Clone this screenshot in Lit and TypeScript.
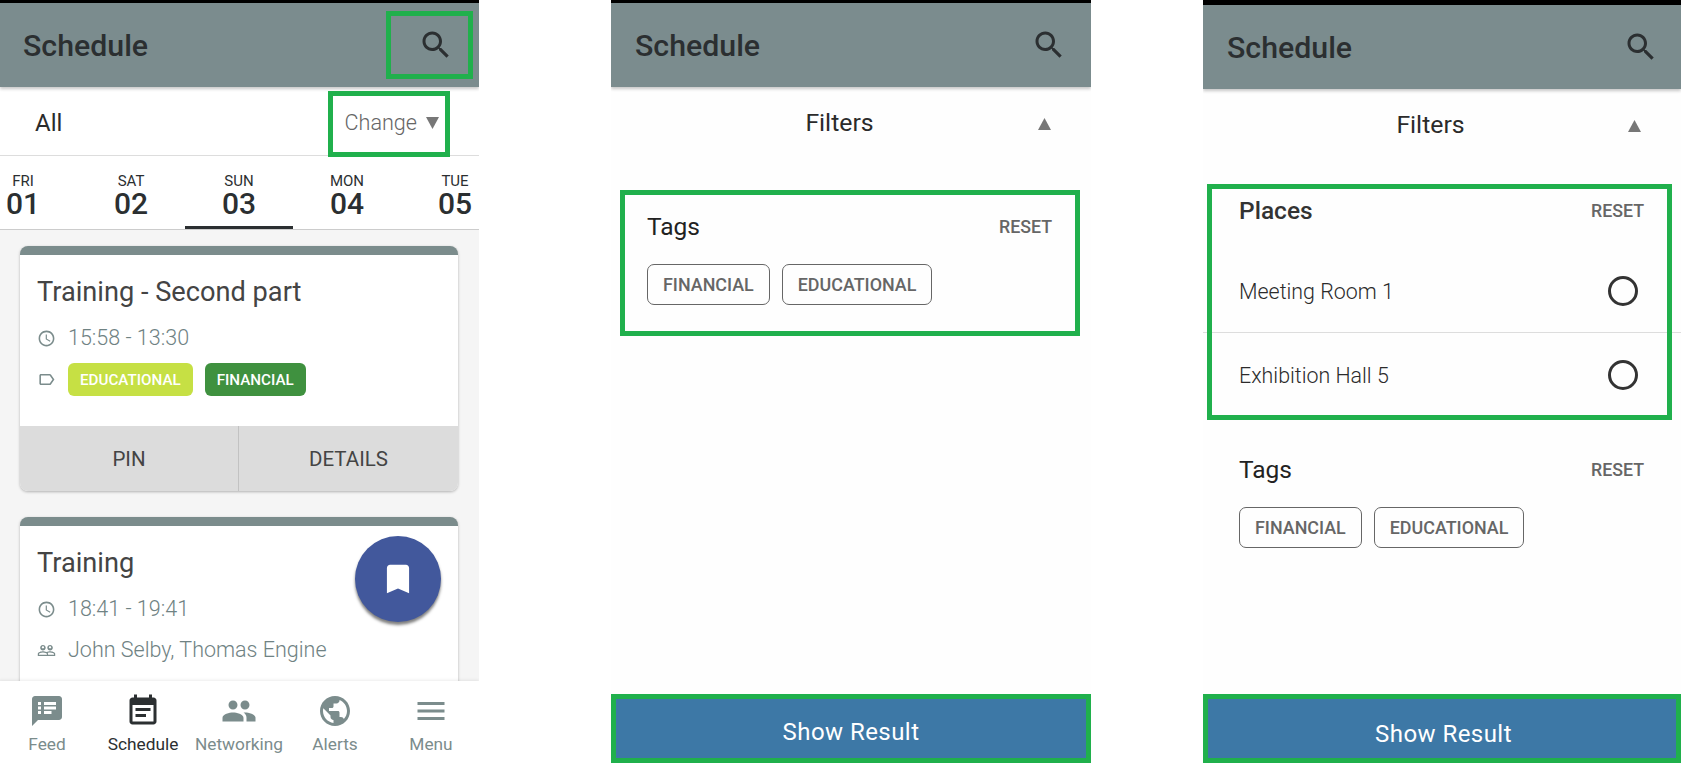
import { LitElement, html, css, svg } from "lit";
import { customElement } from "lit/decorators.js";

const P = {
  search: "M15.5 14h-.79l-.28-.27C15.41 12.59 16 11.11 16 9.5 16 5.91 13.09 3 9.5 3S3 5.91 3 9.5 5.91 16 9.5 16c1.61 0 3.09-.59 4.23-1.57l.27.28v.79l5 4.99L20.49 19l-4.99-5zm-6 0C7.01 14 5 11.99 5 9.5S7.01 5 9.5 5 14 7.01 14 9.5 11.99 14 9.5 14z",
  clock: "M11.99 2C6.47 2 2 6.48 2 12s4.47 10 9.99 10C17.52 22 22 17.52 22 12S17.52 2 11.99 2zM12 20c-4.42 0-8-3.58-8-8s3.58-8 8-8 8 3.58 8 8-3.58 8-8 8zm.5-13H11v6l5.25 3.15.75-1.23-4.5-2.67z",
  label: "M17.63 5.84C17.27 5.33 16.67 5 16 5L5 5.01C3.9 5.01 3 5.9 3 7v10c0 1.1.9 1.99 2 1.99L16 19c.67 0 1.27-.33 1.63-.84L22 12l-4.37-6.16zM16 17H5V7h11l3.55 5L16 17z",
  peopleO: "M16.5 13c-1.2 0-3.07.34-4.5 1-1.43-.67-3.3-1-4.5-1C5.33 13 1 14.08 1 16.25V19h22v-2.75c0-2.17-4.33-3.25-6.5-3.25zm-4 4.5h-10v-1.25c0-.54 2.56-1.75 5-1.75s5 1.21 5 1.75v1.25zm9 0H14v-1.25c0-.46-.2-.86-.52-1.22.88-.3 1.96-.53 3.02-.53 2.44 0 5 1.21 5 1.75v1.25zM7.5 12c1.93 0 3.5-1.57 3.5-3.5S9.43 5 7.5 5 4 6.57 4 8.5 5.57 12 7.5 12zm0-5.5c.83 0 1.5.67 1.5 1.5s-.67 1.5-1.5 1.5S6 8.83 6 8s.67-1.5 1.5-1.5zm9 5.5c1.93 0 3.5-1.57 3.5-3.5S18.43 5 16.5 5 13 6.57 13 8.5s1.57 3.5 3.5 3.5zm0-5.5c.83 0 1.5.67 1.5 1.5s-.67 1.5-1.5 1.5S15 8.83 15 8s.67-1.5 1.5-1.5z",
  bookmark: "M17 3H7c-1.1 0-2 .9-2 2v16l7-3 7 3V5c0-1.1-.9-2-2-2z",
  feed: "M20 2H4c-1.1 0-1.99.9-1.99 2L2 22l4-4h14c1.1 0 2-.9 2-2V4c0-1.1-.9-2-2-2zM8 14H6v-2h2v2zm0-3H6V9h2v2zm0-3H6V6h2v2zm7 6h-5v-2h5v2zm3-3h-8V9h8v2zm0-3h-8V6h8v2z",
  event: "M17 10H7v2h10v-2zm2-7h-1V1h-2v2H8V1H6v2H5c-1.11 0-1.99.9-1.99 2L3 19c0 1.1.89 2 2 2h14c1.1 0 2-.9 2-2V5c0-1.1-.9-2-2-2zm0 16H5V8h14v11zm-5-5H7v2h7v-2z",
  people: "M16 11c1.66 0 2.99-1.34 2.99-3S17.66 5 16 5c-1.66 0-3 1.34-3 3s1.34 3 3 3zm-8 0c1.66 0 2.99-1.34 2.99-3S9.66 5 8 5C6.34 5 5 6.34 5 8s1.34 3 3 3zm0 2c-2.33 0-7 1.17-7 3.5V19h14v-2.5c0-2.33-4.67-3.5-7-3.5zm8 0c-.29 0-.62.02-.97.05 1.16.84 1.97 1.97 1.97 3.45V19h6v-2.5c0-2.33-4.67-3.5-7-3.5z",
  globe: "M12 2C6.48 2 2 6.48 2 12s4.48 10 10 10 10-4.48 10-10S17.52 2 12 2zm-1 17.93c-3.95-.49-7-3.85-7-7.93 0-.62.08-1.21.21-1.79L9 15v1c0 1.1.9 2 2 2v1.93zm6.9-2.54c-.26-.81-1-1.39-1.9-1.39h-1v-3c0-.55-.45-1-1-1H8v-2h2c.55 0 1-.45 1-1V7h2c1.1 0 2-.9 2-2v-.41c2.93 1.19 5 4.06 5 7.41 0 2.08-.8 3.97-2.1 5.39z",
  menu: "M3 18h18v-2H3v2zm0-5h18v-2H3v2zm0-7v2h18V6H3z",
};

const icon = (d: string, cls: string) =>
  html`<svg class=${cls} viewBox="0 0 24 24" fill="currentColor">${svg`<path d=${d}></path>`}</svg>`;

const tri = (up: boolean) =>
  html`<svg class="tri" viewBox="0 0 13 12">${svg`<polygon points=${up ? "6.5,0 13,12 0,12" : "0,0 13,0 6.5,12"}></polygon>`}</svg>`;

@customElement("app-root")
export class AppRoot extends LitElement {
  static styles = css`
    :host { display: block; height: 763px; overflow: hidden; background: #fff; font-family: Roboto, "Liberation Sans", sans-serif; }
    * { box-sizing: border-box; }
    .page { display: flex; height: 763px; }
    .panel { position: relative; display: flex; flex-direction: column; height: 763px; flex: none; background: #fefefe; overflow: hidden; }
    .p1 { width: 479px; background: #fff; }
    .p2 { width: 480px; margin-left: 132px; }
    .p3 { width: 478px; margin-left: 112px; }
    .black { height: 3px; background: #000; flex: none; }
    .p3 .black { height: 5px; }
    .head { height: 84px; flex: none; background: #7b8c8e; display: flex; align-items: center; justify-content: space-between; padding: 0 25px 0 23px; box-shadow: 0 2px 3px rgba(0,0,0,.22); position: relative; z-index: 1; }
    .p2 .head { padding: 0 24px 0 24px; }
    .p3 .head { padding: 0 22px 0 24px; }
    .head h1 { margin: 0; font-size: 30.3px; font-weight: 500; color: #2b2f31; }
    .search { width: 36px; height: 36px; color: #2b2f31; display: block; }
    .filterbar { height: 69px; flex: none; display: flex; align-items: center; justify-content: space-between; padding: 3px 40px 0 35px; border-bottom: 1px solid #ddd; background: #fff; }
    .all { font-size: 24px; color: #2b2b2b; }
    .change { display: flex; align-items: center; gap: 9px; font-size: 21.6px; font-weight: 300; color: #666; }
    .tri { width: 13px; height: 12px; fill: #777; display: block; flex: none; }
    .days { height: 74px; flex: none; display: flex; margin-left: -31px; border-bottom: 1px solid #ccc; background: #fff; }
    .day { width: 108px; flex: none; height: 73px; display: flex; flex-direction: column; align-items: center; padding-top: 17px; color: #2b2f31; border-bottom: 3px solid transparent; }
    .day.on { border-bottom-color: #2b2f31; }
    .day small { font-size: 15px; line-height: 17px; }
    .day b { font-size: 30px; line-height: 28px; font-weight: 500; }
    .list { flex: 1; min-height: 0; overflow: hidden; background: #f5f5f5; padding: 16px 21px 0 20px; display: flex; flex-direction: column; gap: 26px; }
    .card { flex: none; background: #fff; border-radius: 8px; border-top: 9px solid #7b8c8c; box-shadow: 0 1px 3px rgba(0,0,0,.28); overflow: hidden; }
    .body { padding: 21px 17px 30px 17px; }
    .title { font-size: 27.2px; line-height: 32px; color: #444; }
    .meta { display: flex; align-items: center; gap: 12px; font-size: 21.5px; font-weight: 300; line-height: 26px; color: #6f8283; margin-top: 17px; }
    .meta.second { margin-top: 15px; }
    .mi { width: 19px; height: 19px; flex: none; color: #7b8c8c; }
    .tagrow { display: flex; align-items: center; margin-top: 12px; }
    .tagrow .mi { margin-right: 12px; }
    .tag { height: 33px; display: flex; align-items: center; border-radius: 6px; padding: 0 12px; font-size: 15.2px; font-weight: 500; color: #fff; margin-right: 12px; }
    .lime { background: #c6e044; }
    .green { background: #3f913f; }
    .actions { display: flex; height: 65px; background: #dcdcdc; }
    .actions div { display: flex; align-items: center; justify-content: center; font-size: 20.5px; color: #444; }
    .actions div:first-child { flex: 0 0 218px; }
    .actions div + div { flex: 1; border-left: 1px solid #c2c2c2; }
    .fab { position: absolute; left: 355px; top: 536px; width: 86px; height: 86px; border-radius: 50%; background: #42589c; box-shadow: 0 3px 3px rgba(0,0,0,.5); display: flex; align-items: center; justify-content: center; color: #fff; }
    .fab svg { width: 38px; height: 38px; display: block; }
    .nav { height: 82px; flex: none; display: flex; background: #fff; box-shadow: 0 -1px 3px rgba(0,0,0,.08); position: relative; margin-left: -1px; }
    .tab { flex: 1; min-width: 0; display: flex; flex-direction: column; align-items: center; padding-top: 12px; color: #7b8c8c; font-size: 17.3px; white-space: nowrap; }
    .tab svg { width: 36px; height: 36px; display: block; margin-bottom: 5px; }
    .tab.on { color: #2b2f31; }
    .fhead { height: 70px; flex: none; display: flex; align-items: center; padding: 1px 40px 0 30px; }
    .fhead span { flex: 1; text-align: center; font-size: 24.8px; color: #2b2b2b; }
    .fhead .tri { margin-top: 3px; }
    .sec-head { display: flex; justify-content: space-between; align-items: center; height: 30px; padding: 0 39px 1px 36px; }
    .p3 .sec-head { padding: 0 37px 1px 36px; }
    .sec-head strong { font-size: 24.5px; font-weight: 400; color: #222; }
    .sec-head em { font-style: normal; font-size: 17.8px; font-weight: 500; color: #666; }
    .sec-tags { margin-top: 55px; }
    .p3 .sec-tags { margin-top: 38px; }
    .sec-places { margin-top: 37px; }
    .p3 .places { font-weight: 500; color: #333; }
    .chips { display: flex; gap: 12px; margin-top: 22px; padding-left: 36px; }
    .chip { height: 41px; display: flex; align-items: center; padding: 0 15px; border: 1px solid #666; border-radius: 7px; font-size: 17.9px; font-weight: 500; color: #666; }
    .rows { margin-top: 24px; }
    .row { display: flex; align-items: center; justify-content: space-between; padding: 0 43px 0 36px; height: 82px; font-size: 21.4px; font-weight: 300; color: #2b2b2b; }
    .row + .row { border-top: 1px solid #ddd; height: 85px; }
    .radio { width: 30px; height: 30px; border: 3px solid #333; border-radius: 50%; flex: none; }
    .spacer { flex: 1; }
    .show { height: 69px; flex: none; background: #3d78a6; color: #fff; display: flex; align-items: center; justify-content: center; font-size: 24px; padding-top: 6px; letter-spacing: .45px; }
    .p3 .show { padding-top: 10px; padding-left: 3px; }
    .mark { position: absolute; border: 5px solid #20b04c; pointer-events: none; z-index: 5; }
    .m1 { left: 386px; top: 11px; width: 87px; height: 68px; }
    .m2 { left: 328px; top: 91px; width: 122px; height: 66px; }
    .m3 { left: 9px; top: 190px; width: 460px; height: 146px; }
    .m4 { left: 0; top: 694px; width: 480px; height: 69px; }
    .m5 { left: 4px; top: 184px; width: 465px; height: 236px; }
    .m6 { left: 0; top: 694px; width: 478px; height: 69px; }
  `;

  private header() {
    return html`<div class="black"></div>
      <div class="head"><h1>Schedule</h1>${icon(P.search, "search")}</div>`;
  }

  private tagSection() {
    return html`<div class="sec-head sec-tags"><strong>Tags</strong><em>RESET</em></div>
      <div class="chips"><div class="chip">FINANCIAL</div><div class="chip">EDUCATIONAL</div></div>`;
  }

  render() {
    const days = [["FRI", "01"], ["SAT", "02"], ["SUN", "03"], ["MON", "04"], ["TUE", "05"]];
    const tabs = [
      ["Feed", P.feed], ["Schedule", P.event], ["Networking", P.people], ["Alerts", P.globe], ["Menu", P.menu],
    ];
    return html`<div class="page">
      <section class="panel p1">
        ${this.header()}
        <div class="filterbar"><span class="all">All</span><span class="change">Change ${tri(false)}</span></div>
        <div class="days">
          ${days.map(([d, n]) => html`<div class="day ${n === "03" ? "on" : ""}"><small>${d}</small><b>${n}</b></div>`)}
        </div>
        <div class="list">
          <article class="card">
            <div class="body">
              <div class="title">Training - Second part</div>
              <div class="meta">${icon(P.clock, "mi")}<span>15:58 - 13:30</span></div>
              <div class="tagrow">${icon(P.label, "mi")}<span class="tag lime">EDUCATIONAL</span><span class="tag green">FINANCIAL</span></div>
            </div>
            <div class="actions"><div>PIN</div><div>DETAILS</div></div>
          </article>
          <article class="card">
            <div class="body">
              <div class="title">Training</div>
              <div class="meta">${icon(P.clock, "mi")}<span>18:41 - 19:41</span></div>
              <div class="meta second">${icon(P.peopleO, "mi")}<span>John Selby, Thomas Engine</span></div>
            </div>
          </article>
        </div>
        <nav class="nav">
          ${tabs.map(([l, d]) => html`<div class="tab ${l === "Schedule" ? "on" : ""}">${icon(d, "")}<span>${l}</span></div>`)}
        </nav>
        <div class="fab">${icon(P.bookmark, "")}</div>
        <div class="mark m1"></div>
        <div class="mark m2"></div>
      </section>

      <section class="panel p2">
        ${this.header()}
        <div class="fhead"><span>Filters</span>${tri(true)}</div>
        ${this.tagSection()}
        <div class="spacer"></div>
        <div class="show">Show Result</div>
        <div class="mark m3"></div>
        <div class="mark m4"></div>
      </section>

      <section class="panel p3">
        ${this.header()}
        <div class="fhead"><span>Filters</span>${tri(true)}</div>
        <div class="sec-head sec-places"><strong class="places">Places</strong><em>RESET</em></div>
        <div class="rows">
          <div class="row"><span>Meeting Room 1</span><div class="radio"></div></div>
          <div class="row"><span>Exhibition Hall 5</span><div class="radio"></div></div>
        </div>
        ${this.tagSection()}
        <div class="spacer"></div>
        <div class="show">Show Result</div>
        <div class="mark m5"></div>
        <div class="mark m6"></div>
      </section>
    </div>`;
  }
}
